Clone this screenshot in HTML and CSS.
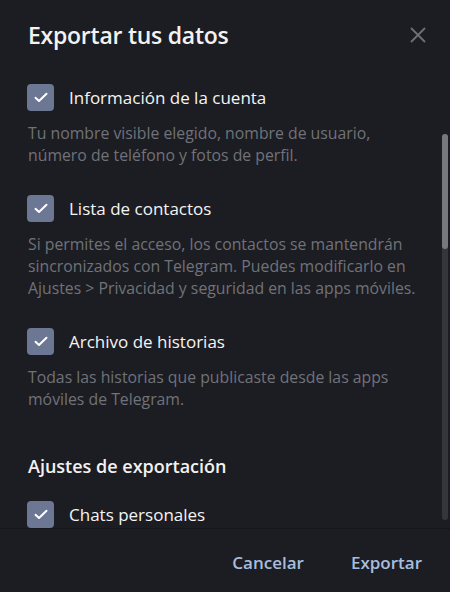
FILE: index.html
```html
<!DOCTYPE html>
<html lang="es">

<head>
  <meta charset="UTF-8">
  <meta name="viewport" content="width=device-width, initial-scale=1.0">
  <title>Exportar tus datos</title>
  <link rel="stylesheet" href="styles.css">
</head>

<body>
  <div class="dialog">
    <div class="header">
      <h1>Exportar tus datos</h1>
      <button class="close" type="button" aria-label="Cerrar">
        <svg width="16" height="16" viewBox="0 0 16 16">
          <path d="M1 1 L15 15 M15 1 L1 15" stroke="#6d7077" stroke-width="1.8" fill="none" />
        </svg>
      </button>
    </div>

    <div class="body">
      <div class="content">
        <label class="option">
          <span class="check"><svg width="14" height="11" viewBox="0 0 14 11"><path d="M1.5 5.8 L5 9 L12.5 1.8" stroke="#fff" stroke-width="2" fill="none" stroke-linecap="round" stroke-linejoin="round" /></svg></span>
          Información de la cuenta
        </label>
        <p class="hint">Tu nombre visible elegido, nombre de usuario, número de teléfono y fotos de perfil.</p>

        <label class="option">
          <span class="check"><svg width="14" height="11" viewBox="0 0 14 11"><path d="M1.5 5.8 L5 9 L12.5 1.8" stroke="#fff" stroke-width="2" fill="none" stroke-linecap="round" stroke-linejoin="round" /></svg></span>
          Lista de contactos
        </label>
        <p class="hint">Si permites el acceso, los contactos se mantendrán sincronizados con Telegram. Puedes modificarlo en Ajustes &gt; Privacidad y seguridad en las apps móviles.</p>

        <label class="option">
          <span class="check"><svg width="14" height="11" viewBox="0 0 14 11"><path d="M1.5 5.8 L5 9 L12.5 1.8" stroke="#fff" stroke-width="2" fill="none" stroke-linecap="round" stroke-linejoin="round" /></svg></span>
          Archivo de historias
        </label>
        <p class="hint">Todas las historias que publicaste desde las apps móviles de Telegram.</p>

        <h2>Ajustes de exportación</h2>

        <label class="option">
          <span class="check"><svg width="14" height="11" viewBox="0 0 14 11"><path d="M1.5 5.8 L5 9 L12.5 1.8" stroke="#fff" stroke-width="2" fill="none" stroke-linecap="round" stroke-linejoin="round" /></svg></span>
          Chats personales
        </label>
      </div>
      <div class="scrollbar"><div class="thumb"></div></div>
    </div>

    <div class="footer">
      <button type="button">Cancelar</button>
      <button type="button">Exportar</button>
    </div>
  </div>
</body>

</html>
```

FILE: styles.css
```css
body {
  margin: 0;
  background-color: #1c1d22;
  font-family: "Open Sans", "Noto Sans", sans-serif;
  color: #f2f2f3;
}

.dialog {
  width: 450px;
  height: 592px;
  display: flex;
  flex-direction: column;
  overflow: hidden;
}

.header {
  display: flex;
  justify-content: space-between;
  align-items: center;
  padding: 17px 24px 0 28px;
  height: 35px;
}

h1 {
  margin: 0;
  font-size: 23px;
  line-height: 34px;
  font-weight: 600;
  letter-spacing: -0.25px;
}

.close {
  background: none;
  border: none;
  padding: 0;
  width: 16px;
  height: 16px;
  margin-top: 1px;
  cursor: pointer;
}

.body {
  display: flex;
  height: 476px;
  border-bottom: 1px solid #16171b;
}

.content {
  flex: 1;
  padding: 32px 0 0 27px;
  overflow: hidden;
}

.option {
  display: flex;
  align-items: center;
  height: 27px;
  font-size: 17px;
  color: #f4f4f5;
}

.check {
  width: 27px;
  height: 27px;
  border-radius: 4px;
  background-color: #6c7794;
  display: flex;
  align-items: center;
  justify-content: center;
  margin-right: 15px;
}

.hint {
  margin: 11px 0 29px 1px;
  font-size: 15.8px;
  line-height: 22px;
  color: #707279;
  width: 396px;
}

h2 {
  margin: 45px 0 23px 1px;
  font-size: 18px;
  line-height: 23px;
  font-weight: 600;
}

.scrollbar {
  width: 6px;
  margin: 82px 2px 8px 0;
  background-color: #34363b;
  border-radius: 3px;
}

.thumb {
  height: 115px;
  background-color: #76787d;
  border-radius: 3px;
}

.footer {
  flex: 1;
  display: flex;
  justify-content: flex-end;
  align-items: center;
  gap: 47px;
  padding: 4px 28px 0 0;
}

.footer button {
  background: none;
  border: none;
  padding: 0;
  font-family: inherit;
  font-size: 17px;
  font-weight: 600;
  color: #a9bddd;
  cursor: pointer;
}
```
